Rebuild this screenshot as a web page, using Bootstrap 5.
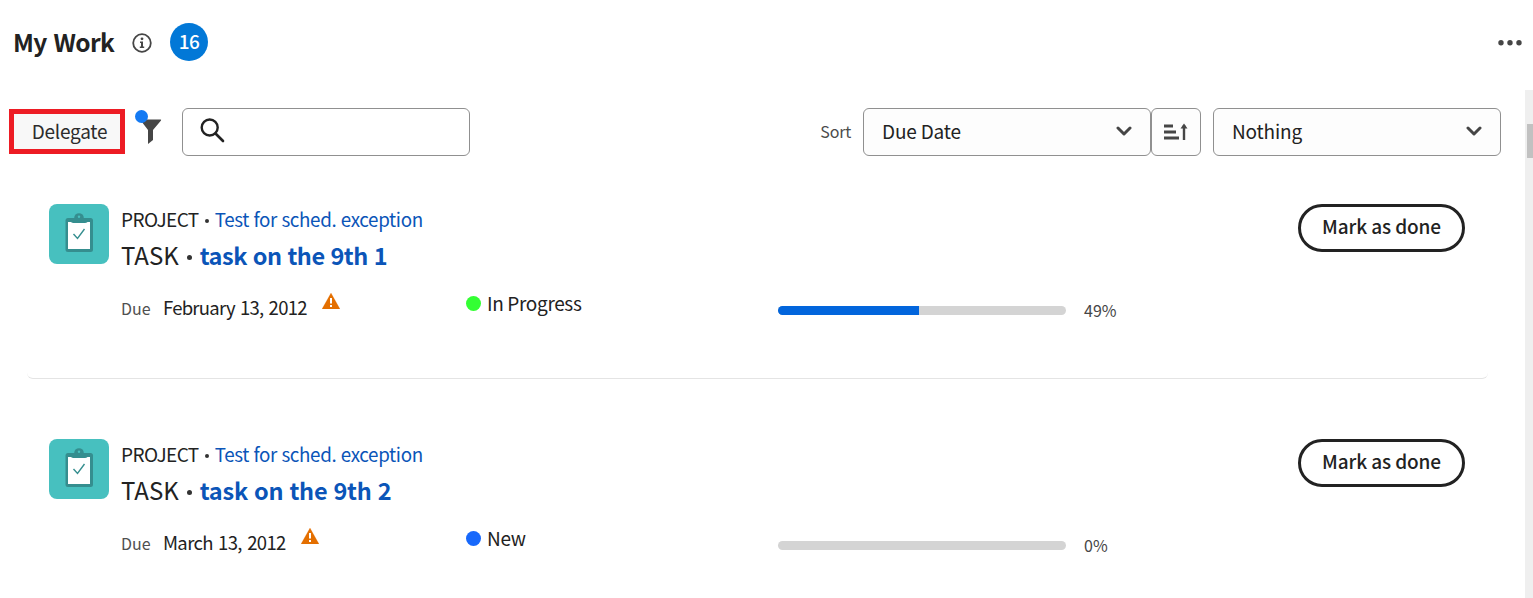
<!DOCTYPE html>
<html lang="en">
<head>
<meta charset="utf-8">
<meta name="viewport" content="width=device-width, initial-scale=1">
<title>My Work</title>
<link href="https://cdn.jsdelivr.net/npm/bootstrap@5.3.0/dist/css/bootstrap.min.css" rel="stylesheet">
<style>
body{font-family:"Noto Sans CJK JP","Noto Sans",sans-serif;font-size:19px;line-height:24px;color:#222;height:598px;overflow:hidden;background:#fff}
svg{display:block;flex:none}
.top-bar{height:90px;padding:0 11px 6px 13px}
.page-title{font-size:24.5px;line-height:32px;font-weight:700;letter-spacing:-.65px;word-spacing:2px;width:101px;margin:0 18px 1px 0;white-space:nowrap}
.info-mark{margin-top:1px}
.count-pill{width:38px;height:38px;font-size:19px;font-weight:500;background:#0278d7;margin-left:18px;padding-bottom:2px;letter-spacing:-.5px}
.tool-row{padding:18px 32px 0 9px;height:66px}
.delegate-btn{width:116px;height:45px;border:5px solid #ed1c24;border-radius:0;background:#f8f8f8;padding:0 0 2px 5px;font-size:19px;line-height:24px;letter-spacing:-.25px;color:#2c2c2c;margin-top:1px}
.filter-wrap{width:28px;height:36px;margin:1px 19px 0 10px}
.filter-dot{width:13px;height:13px;background:#147af3;left:0;top:1px}
.field-box{height:48px;border:1px solid #909090;border-radius:6px;background:#fdfdfd;font-size:19px;letter-spacing:-.17px;padding:0 18px 2px 18px}
.wide{width:288px}
.square{width:50px;padding:0 11px 0 12px}
.search-box{background:#fff;padding:0 17px 4px}
.sort-label{font-size:16px;color:#4b4b4b;margin:0 12px 2px 0;letter-spacing:-.2px}
.work-item{margin:0 45px 0 27px;height:235px;padding:60px 23px 0 22px;border-bottom:1px solid #e4e4e4;border-radius:6px}
.work-item.first{height:223px;padding-top:48px}
.task-tile{width:60px;height:60px;border-radius:8px;background:#47c0bf;margin-right:12px}
.project-line{font-size:19px;line-height:32px;margin-top:-1px}
.task-line{font-size:24px;line-height:40px}
.sep{display:inline-block;border-radius:50%;background:#333;width:4px;height:4px;margin:0 6px;vertical-align:4px}
.task-line .sep{width:5px;height:5px;margin:0 8px;vertical-align:5px}
.work-link{color:#0b55b8;text-decoration:none}
.project-line .work-link{font-size:18.8px;letter-spacing:-.35px;word-spacing:.6px}
.t-proj{letter-spacing:-.6px}
.task-line .work-link{font-size:23.5px;letter-spacing:-.2px;word-spacing:.9px}
.first .task-line .work-link{letter-spacing:-.45px}
.done-btn{width:167px;height:48px;border:3px solid #222;font-size:19px;line-height:24px;font-weight:500;letter-spacing:-.1px;color:#222;padding:0 0 5px 0}
.meta-row{margin:10px 0 0 72px;height:44px}
.due-col{width:345px;padding-top:10px}
.due-label{font-size:16px;color:#505050;width:42px;padding-top:1px}
.due-date{font-size:18.5px;letter-spacing:-.65px;word-spacing:1.8px}
.first .due-date{letter-spacing:-.75px}
.warn{margin:-2px 0 0 15px}
.status-col{width:312px;padding-top:6px;letter-spacing:-.35px}
.status-dot{width:15px;height:15px;margin:5px 6px 0 0}
.bar-col{padding-top:7px}
.progress.work-bar{width:288px;height:9px;background:#d4d4d4;border-radius:5px}
.work-bar .progress-bar{background:#0265dc}
.pct{font-size:16px;color:#464646;margin-left:18px;margin-top:-1px}
.scroll-track{position:absolute;right:0;top:90px;width:8px;height:508px;background:#efefef;padding:34px 0 0 2px}
.scroll-thumb{height:34px;background:#c1c1c1}
</style>
</head>
<body class="position-relative">
<svg width="0" height="0" class="position-absolute">
<symbol id="tile" viewBox="0 0 60 60"><circle cx="30" cy="14" r="4.8" fill="#358e8f"/><rect x="16.500" y="14" width="27.500" height="34" rx="2.5" fill="#358e8f"/><path d="M19 18H41V45H19z" fill="#fff"/><path d="M21.500 14h17.500v2q0 3-3 3H24.500q-3 0-3-3z" fill="#358e8f"/><circle cx="30" cy="12.800" r="1.2" fill="#47c0bf"/><path d="M24.5 30 28.5 34.500 35.5 25" fill="none" stroke="#358e8f" stroke-width="1.4"/></symbol>
<symbol id="warn" viewBox="0 0 18 16"><path d="M9 0 18 16H0z" fill="#e46f00" stroke="#e46f00" stroke-width=".2"/><path d="M8 5h2v5.5H8zM8 12h2v2H8z" fill="#fff"/></symbol>
<symbol id="chev" viewBox="0 0 16 10"><path d="M2 2 8 8 14 2" fill="none" stroke="#464646" stroke-width="3" stroke-linecap="round" stroke-linejoin="round"/></symbol>
</svg>
<header class="top-bar d-flex align-items-center">
<h1 class="page-title">My Work</h1>
<svg class="info-mark" width="20" height="20" viewBox="0 0 20 20"><circle cx="10" cy="10" r="8.8" fill="none" stroke="#464646" stroke-width="1.8"/><circle cx="10" cy="5.8" r="1.4" fill="#464646"/><path d="M8 8.5h3v5h1.2V15H7.8v-1.5H9V10H8z" fill="#464646"/></svg>
<span class="count-pill rounded-circle text-white d-flex align-items-center justify-content-center">16</span>
<svg class="ms-auto" width="24" height="8" viewBox="0 0 24 8"><g fill="#464646"><circle cx="3" cy="4.700" r="2.7"/><circle cx="12" cy="4.700" r="2.7"/><circle cx="21" cy="4.700" r="2.7"/></g></svg>
</header>
<main>
<div class="tool-row d-flex align-items-start">
<button class="delegate-btn btn">Delegate</button>
<div class="filter-wrap position-relative"><svg width="28" height="36" viewBox="0 0 28 36"><path d="M5 10.500H25.5q1 0 .5 1L18 21V31L13 35V21z" fill="#464646"/></svg><span class="filter-dot rounded-circle position-absolute"></span></div>
<div class="field-box wide search-box d-flex align-items-center"><svg width="25" height="25" viewBox="0 0 25 25"><circle cx="9.700" cy="9.500" r="8" fill="none" stroke="#222" stroke-width="2.400"/><path d="M15.500 15.500 23 23" stroke="#222" stroke-width="2.600" stroke-linecap="round"/></svg></div>
<div class="d-flex align-items-center ms-auto">
<span class="sort-label">Sort</span>
<div class="field-box wide d-flex align-items-center justify-content-between"><span>Due Date</span><svg width="16" height="10"><use href="#chev"/></svg></div>
<div class="field-box square d-flex align-items-center"><svg width="25" height="18" viewBox="0 0 25 18"><path d="M0 3H9M0 9H12M0 15H15" stroke="#464646" stroke-width="2.800"/><path d="M20 2V17" stroke="#464646" stroke-width="2.400"/><path d="M16.500 5.500 20 .5 23.500 5.500z" fill="#464646"/></svg></div>
<div class="field-box wide d-flex align-items-center justify-content-between" style="margin-left:12px"><span>Nothing</span><svg width="16" height="10"><use href="#chev"/></svg></div>
</div>
</div>
<article class="work-item first">
<div class="d-flex align-items-start">
<svg class="task-tile"><use href="#tile"/></svg>
<div><div class="project-line"><span class="t-proj">PROJECT</span><span class="sep"></span><a class="work-link" href="#">Test for sched. exception</a></div><div class="task-line"><span>TASK</span><span class="sep"></span><a class="work-link fw-bold" href="#">task on the 9th 1</a></div></div>
<button class="done-btn btn rounded-pill ms-auto">Mark as done</button>
</div>
<div class="meta-row d-flex">
<div class="due-col d-flex"><span class="due-label">Due</span><span class="due-date">February 13, 2012</span><svg class="warn" width="18" height="16"><use href="#warn"/></svg></div>
<div class="status-col d-flex"><span class="status-dot rounded-circle" style="background:#3f3"></span>In Progress</div>
<div class="bar-col d-flex align-items-center"><div class="progress work-bar"><div class="progress-bar" style="width:49%"></div></div><span class="pct">49%</span></div>
</div>
</article>
<article class="work-item border-0">
<div class="d-flex align-items-start">
<svg class="task-tile"><use href="#tile"/></svg>
<div><div class="project-line"><span class="t-proj">PROJECT</span><span class="sep"></span><a class="work-link" href="#">Test for sched. exception</a></div><div class="task-line"><span>TASK</span><span class="sep"></span><a class="work-link fw-bold" href="#">task on the 9th 2</a></div></div>
<button class="done-btn btn rounded-pill ms-auto">Mark as done</button>
</div>
<div class="meta-row d-flex">
<div class="due-col d-flex"><span class="due-label">Due</span><span class="due-date">March 13, 2012</span><svg class="warn" width="18" height="16"><use href="#warn"/></svg></div>
<div class="status-col d-flex"><span class="status-dot rounded-circle" style="background:#1768fb"></span>New</div>
<div class="bar-col d-flex align-items-center"><div class="progress work-bar"><div class="progress-bar" style="width:0%"></div></div><span class="pct">0%</span></div>
</div>
</article>
</main>
<div class="scroll-track"><div class="scroll-thumb"></div></div>
<script src="https://cdn.jsdelivr.net/npm/bootstrap@5.3.0/dist/js/bootstrap.bundle.min.js"></script>
</body>
</html>
